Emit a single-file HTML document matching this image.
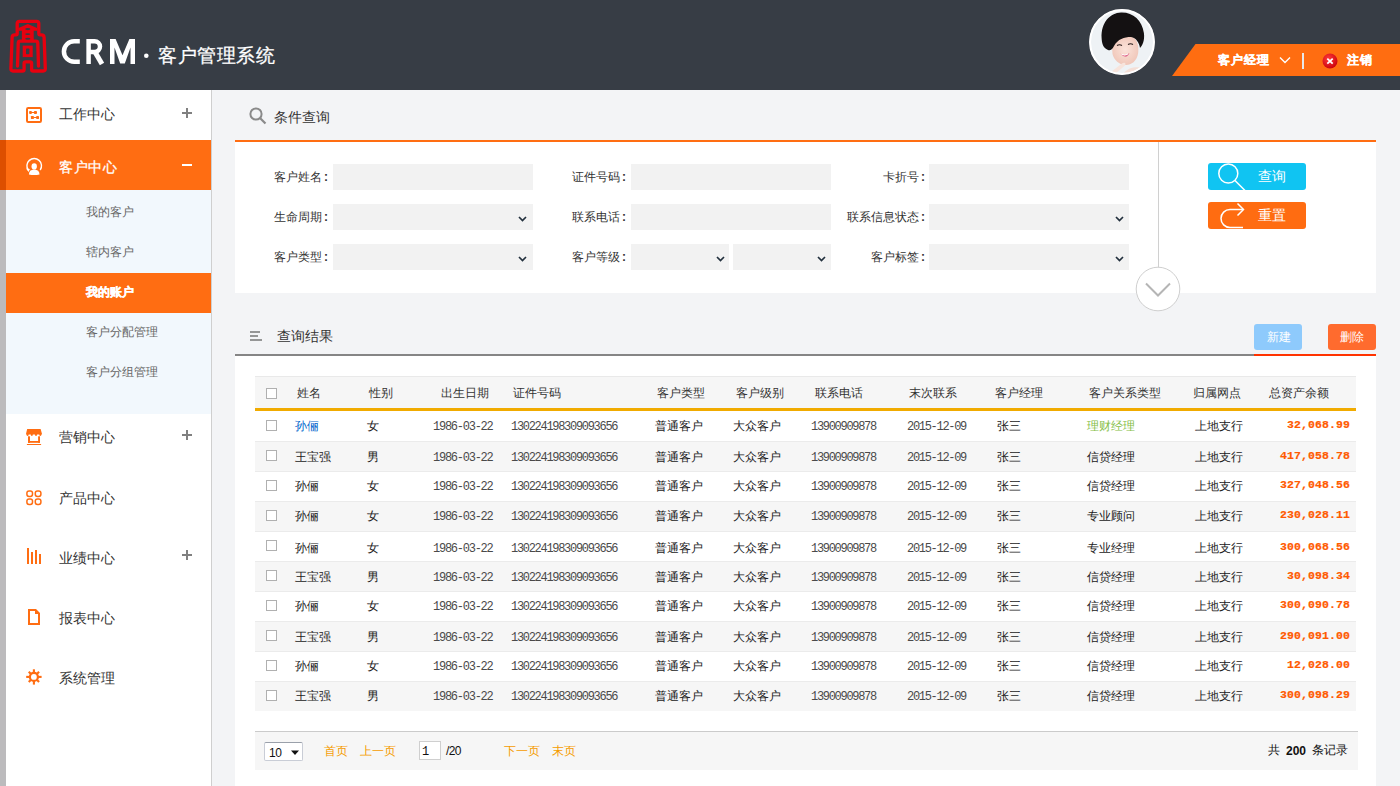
<!DOCTYPE html>
<html><head><meta charset="utf-8">
<style>
*{margin:0;padding:0;box-sizing:border-box}
html,body{width:1400px;height:786px;overflow:hidden;background:#f3f4f6;font-family:"Liberation Sans",sans-serif;color:#333}
.a{position:absolute}
.t{position:absolute;white-space:nowrap;line-height:1}
.mi{font-size:14px;color:#333}
.sub{font-size:12px;color:#666}
.lbl{font-size:12px;color:#333}
.inp{position:absolute;height:26px;background:#f2f2f2}
.th{font-size:12px;color:#333}
.cell{position:absolute;white-space:nowrap;line-height:1;font-size:12px;color:#222}
.num{font-family:"Liberation Mono",monospace;font-size:12px;letter-spacing:-1.2px;color:#4a4a4a}
.amt{font-family:"Liberation Mono",monospace;font-weight:bold;font-size:11.5px;letter-spacing:0.1px;color:#ff5a00;-webkit-text-stroke:0.2px #ff5a00}
.cb{position:absolute;width:11px;height:11px;border:1px solid #b0b0b0;background:#fff}
svg{position:absolute;overflow:visible}
</style></head><body>
<div class="a" style="left:0px;top:0px;width:1400px;height:90px;background:#373d45;"></div>
<svg style="left:0;top:0" width="60" height="90" viewBox="0 0 60 90">
<g fill="none" stroke="#e8000f" stroke-width="3.3" stroke-linejoin="round" stroke-linecap="round">
<path d="M17.20 23.50 Q17.20 21.30 19.40 21.30 L36.60 21.30 Q38.80 21.30 38.80 23.50 L38.80 33.60 Q38.80 34.80 40.00 34.80 L41.40 34.80 Q44.00 34.80 44.10 37.40 L45.31 68.80 Q45.40 71.00 43.20 71.00 L33.20 71.00 Q31.60 71.00 31.60 69.40 L31.60 63.50 Q31.60 61.90 30.00 61.90 L25.70 61.90 Q24.10 61.90 24.10 63.50 L24.10 69.40 Q24.10 71.00 22.50 71.00 L13.00 71.00 Q10.80 71.00 10.89 68.80 L12.10 37.40 Q12.20 34.80 14.70 34.80 L16.00 34.80 Q17.20 34.80 17.20 33.60 Z"/>
<path d="M17.50 66.00 L18.24 42.90 Q18.30 41.10 20.10 41.10 L35.90 41.10 Q37.70 41.10 37.76 42.90 L38.50 66.00 "/>
</g>
<g fill="#e8000f">
<path d="M18.5 27.9 L27.8 24 L37.1 27.9 V30.8 H33.7 V40 H21.9 V30.8 H18.5 Z"/>
<rect x="22.7" y="45.6" width="10" height="11.5"/>
</g>
<g fill="#373d45">
<ellipse cx="27.8" cy="29.1" rx="2.6" ry="1.1"/>
<ellipse cx="27.8" cy="34.1" rx="2.6" ry="0.95"/>
<ellipse cx="27.8" cy="38.8" rx="2.6" ry="0.95"/>
<rect x="26" y="48.5" width="3.4" height="5.8" rx="0.8"/>
</g>
</svg>
<svg style="left:0;top:0" width="150" height="90" viewBox="0 0 150 90">
<g fill="none" stroke="#fff" stroke-width="4.5">
<path d="M79.8 41.2 H74.2 A10.3 10.3 0 0 0 74.2 61.8 H79.8"/>
<path d="M88.6 39 V64"/>
<path d="M88.6 41.2 H94.6 A5.4 5.4 0 0 1 94.6 52 H88.6"/>
<path d="M95.3 52.5 L102 64" stroke-width="5"/>
</g>
<path fill="#fff" d="M110 64 V39 H115.6 L122.5 55.2 L129.4 39 H135 V64 H130.5 V47.5 L124.8 63.5 H120.2 L114.5 47.5 V64 Z"/>
<circle cx="146.3" cy="55.8" r="2.3" fill="#fff"/>
</svg>
<div class="t " style="left:158px;top:46px;font-size:19.3px;color:#fff;-webkit-text-stroke:0.25px #fff;letter-spacing:0.6px">客户管理系统</div>
<svg style="left:1088px;top:8px" width="68" height="68" viewBox="0 0 68 68">
<defs><clipPath id="avc"><circle cx="34" cy="34" r="31"/></clipPath>
<radialGradient id="skin" cx="0.5" cy="0.45" r="0.6"><stop offset="0" stop-color="#fbe3da"/><stop offset="1" stop-color="#efc4b6"/></radialGradient></defs>
<circle cx="34" cy="34" r="32.6" fill="#fff"/>
<g clip-path="url(#avc)">
<rect x="0" y="0" width="68" height="68" fill="#eef2f5"/>
<path d="M34 68 C38 60 46 58 56 60 L60 68 Z" fill="#f4dfd7"/>
<path d="M24 38 C26 31 36 28 44 29 C50 31 51 40 50 46 C48.5 53 43.5 57 38 57 C31 57 26 52 24.5 46 Z" fill="url(#skin)"/>
<path d="M13.6 30 C13 14 22 5 33 4.4 C45 4 54 12 55.9 25 C57 33 54 38 52 40 C51 34 48 30 43 29 C36 29 30 31 26 38 C24 42 22 43 20 42 C15 40 13.8 35 13.6 30 Z" fill="#141112"/>
<path d="M29 37.5 Q31.5 36 34 37.5 M40 36.5 Q42.5 35 45 36.5" stroke="#2a1d1c" stroke-width="1.1" fill="none"/>
<path d="M32 45.5 Q37 49 41.5 45 Q38.5 52 32 45.5 Z" fill="#e06b90"/>
<path d="M33.5 46.3 Q37 48 40 46" stroke="#fff" stroke-width="0.9" fill="none"/>
<path d="M19 67 C24 63 30 58.5 34 55.5 C36 54 38.5 55 37 57.5 C33 61 28 64.5 24 69 Z" fill="#f7e4dc"/>
</g>
<circle cx="34" cy="34" r="32" fill="none" stroke="#fff" stroke-width="1.8"/>
</svg>
<svg style="left:1170px;top:44px" width="230" height="32" viewBox="0 0 230 32"><path d="M25.5 0 H230 V32 H2 Z" fill="#ff6d11"/></svg>
<div class="t " style="left:1218px;top:54px;font-size:12px;color:#fff;font-weight:bold;letter-spacing:0.9px;-webkit-text-stroke:0.35px #fff">客户经理</div>
<svg style="left:1279px;top:56px" width="12" height="8" viewBox="0 0 12 8"><path d="M1 1.5 L6 6.5 L11 1.5" fill="none" stroke="#fff" stroke-width="1.4"/></svg>
<div class="a" style="left:1302px;top:53px;width:1.5px;height:16px;background:#e8e8e8;"></div>
<svg style="left:1320px;top:51px" width="20" height="20" viewBox="0 0 20 20"><defs><radialGradient id="rg" cx="0.4" cy="0.35" r="0.7"><stop offset="0" stop-color="#ff3b3b"/><stop offset="1" stop-color="#c8000c"/></radialGradient></defs><circle cx="10" cy="10" r="7.5" fill="url(#rg)"/><path d="M7.3 7.6 L12.7 12.6 M12.7 7.6 L7.3 12.6" stroke="#fff" stroke-width="1.8"/></svg>
<div class="t " style="left:1347px;top:54px;font-size:12px;color:#fff;font-weight:bold;letter-spacing:0.9px;-webkit-text-stroke:0.35px #fff">注销</div>
<div class="a" style="left:0px;top:90px;width:212px;height:696px;background:#ffffff;border-right:1px solid #cfcfcf"></div>
<div class="a" style="left:0px;top:90px;width:6px;height:696px;background:#bcbbbd;"></div>
<div class="a" style="left:6px;top:140px;width:205px;height:50px;background:#ff6d12;"></div>
<div class="a" style="left:0px;top:140px;width:6px;height:50px;background:#dd4f00;"></div>
<div class="a" style="left:6px;top:190px;width:205px;height:224px;background:#f2f8fd;"></div>
<div class="a" style="left:6px;top:273px;width:205px;height:40px;background:#ff6d12;"></div>
<svg style="left:26px;top:107px" width="16" height="16" viewBox="0 0 16 16">
<rect x="1" y="1" width="14" height="14" rx="1.2" fill="none" stroke="#ff6d12" stroke-width="2"/>
<path d="M5 5.5 H9 M7.5 10.5 H11" stroke="#ff6d12" stroke-width="1"/>
<rect x="3.1" y="4.1" width="2.8" height="2.8" rx="0.9" fill="#ff6d12"/><rect x="7.9" y="4.1" width="3.1" height="2.8" rx="0.9" fill="#ff6d12"/>
<rect x="4.9" y="9" width="3" height="3" rx="0.4" fill="#ff6d12"/><rect x="10.2" y="9" width="2.8" height="3" rx="0.4" fill="#ff6d12"/>
</svg>
<div class="t mi" style="left:59px;top:107px;">工作中心</div>
<svg style="left:182px;top:108px" width="10" height="10" viewBox="0 0 10 10"><path d="M0 5 H10 M5 0 V10" stroke="#808080" stroke-width="2"/></svg>
<svg style="left:25px;top:157px" width="18" height="18" viewBox="0 0 18 18">
<path d="M15.2 13 A7.3 7.3 0 1 0 3.2 13" fill="none" stroke="#fff" stroke-width="1.4"/>
<path d="M1 11.6 L4.9 11.9 L3.6 15 Z" fill="#fff"/>
<ellipse cx="9.2" cy="9.4" rx="2.7" ry="3.1" fill="#fff"/>
<path d="M3.9 17.4 Q3.9 12.6 9.2 12.4 Q14.5 12.6 14.5 17.4 Q9.2 18.4 3.9 17.4 Z" fill="#fff"/>
</svg>
<div class="t mi" style="left:59px;top:160px;color:#fff;-webkit-text-stroke:0.3px #fff;letter-spacing:0.5px">客户中心</div>
<div class="a" style="left:182px;top:164px;width:10px;height:2px;background:#fff;"></div>
<div class="t sub" style="left:86px;top:206px;">我的客户</div>
<div class="t sub" style="left:86px;top:246px;">辖内客户</div>
<div class="t sub" style="left:86px;top:286px;color:#fff;font-weight:bold;-webkit-text-stroke:0.35px #fff">我的账户</div>
<div class="t sub" style="left:86px;top:326px;">客户分配管理</div>
<div class="t sub" style="left:86px;top:366px;">客户分组管理</div>
<svg style="left:26px;top:429px" width="16" height="17" viewBox="0 0 16 17">
<g fill="#ff6d12">
<path d="M1.2 0 H14.6 L15.9 4.6 V5.6 H0.1 V4.6 Z"/>
<circle cx="1.6" cy="5.8" r="1.1"/><circle cx="5.8" cy="5.8" r="1.1"/><circle cx="10" cy="5.8" r="1.1"/><circle cx="14.3" cy="5.8" r="1.1"/>
<rect x="2" y="7.3" width="2" height="6.5"/><rect x="12.1" y="7.3" width="1.9" height="6.5"/><rect x="2" y="12" width="12" height="1.8"/>
<rect x="0.9" y="15" width="14.2" height="1"/>
</g>
</svg>
<div class="t mi" style="left:59px;top:430px;">营销中心</div>
<svg style="left:182px;top:430px" width="10" height="10" viewBox="0 0 10 10"><path d="M0 5 H10 M5 0 V10" stroke="#808080" stroke-width="2"/></svg>
<svg style="left:26px;top:490px" width="16" height="16" viewBox="0 0 16 16">
<g fill="none" stroke="#ff6d12" stroke-width="1.5">
<rect x="0.9" y="0.9" width="5.6" height="5.6" rx="2.2"/><rect x="9.3" y="0.9" width="5.6" height="5.6" rx="2.2"/>
<rect x="0.9" y="8.9" width="5.6" height="5.6" rx="2.2"/><rect x="9.3" y="8.9" width="5.6" height="5.6" rx="2.2"/>
</g></svg>
<div class="t mi" style="left:59px;top:491px;">产品中心</div>
<svg style="left:26px;top:548px" width="16" height="17" viewBox="0 0 16 17">
<g fill="#ff6d12"><rect x="1" y="0" width="2" height="16"/><rect x="5" y="4" width="2" height="12"/><rect x="9" y="2" width="2" height="14"/><rect x="13" y="6" width="2" height="10"/></g>
</svg>
<div class="t mi" style="left:59px;top:551px;">业绩中心</div>
<svg style="left:182px;top:550px" width="10" height="10" viewBox="0 0 10 10"><path d="M0 5 H10 M5 0 V10" stroke="#808080" stroke-width="2"/></svg>
<svg style="left:28px;top:609px" width="13" height="16" viewBox="0 0 13 16">
<path d="M1 1 H7.6 L11 4.4 V15 H1 Z" fill="none" stroke="#ff6d12" stroke-width="2" stroke-linejoin="miter"/>
<path d="M7 0 L12 5 H7 Z" fill="#ff6d12"/>
</svg>
<div class="t mi" style="left:59px;top:611px;">报表中心</div>
<svg style="left:26px;top:669px" width="16" height="16" viewBox="0 0 16 16">
<g fill="#ff6d12">
<circle cx="7.9" cy="7.9" r="5.1"/>
<rect x="6.85" y="0.3" width="2.1" height="15.3"/><rect x="0.2" y="6.85" width="15.4" height="2.1"/>
<rect x="6.85" y="0.6" width="2.1" height="14.6" transform="rotate(45 7.9 7.9)"/><rect x="6.85" y="0.6" width="2.1" height="14.6" transform="rotate(-45 7.9 7.9)"/>
</g><circle cx="7.9" cy="7.9" r="2.9" fill="#fff"/>
</svg>
<div class="t mi" style="left:59px;top:671px;">系统管理</div>
<svg style="left:248px;top:106px" width="20" height="20" viewBox="0 0 20 20"><circle cx="8" cy="8" r="5.6" fill="none" stroke="#8a8a8a" stroke-width="2"/><path d="M12 12 L17.5 17.5" stroke="#8a8a8a" stroke-width="2.2"/></svg>
<div class="t " style="left:274px;top:110px;font-size:14px;color:#333">条件查询</div>
<div class="a" style="left:235px;top:140px;width:1141px;height:2px;background:#ff6d12;"></div>
<div class="a" style="left:235px;top:142px;width:1141px;height:151px;background:#fff;"></div>
<div class="t lbl" style="right:1078px;top:171px;">客户姓名</div>
<div class="t lbl" style="left:324px;top:171px;font-weight:bold;font-size:12px">:</div>
<div class="t lbl" style="right:780px;top:171px;">证件号码</div>
<div class="t lbl" style="left:622px;top:171px;font-weight:bold;font-size:12px">:</div>
<div class="t lbl" style="right:481px;top:171px;">卡折号</div>
<div class="t lbl" style="left:921px;top:171px;font-weight:bold;font-size:12px">:</div>
<div class="t lbl" style="right:1078px;top:211px;">生命周期</div>
<div class="t lbl" style="left:324px;top:211px;font-weight:bold;font-size:12px">:</div>
<div class="t lbl" style="right:780px;top:211px;">联系电话</div>
<div class="t lbl" style="left:622px;top:211px;font-weight:bold;font-size:12px">:</div>
<div class="t lbl" style="right:481px;top:211px;">联系信息状态</div>
<div class="t lbl" style="left:921px;top:211px;font-weight:bold;font-size:12px">:</div>
<div class="t lbl" style="right:1078px;top:251px;">客户类型</div>
<div class="t lbl" style="left:324px;top:251px;font-weight:bold;font-size:12px">:</div>
<div class="t lbl" style="right:780px;top:251px;">客户等级</div>
<div class="t lbl" style="left:622px;top:251px;font-weight:bold;font-size:12px">:</div>
<div class="t lbl" style="right:481px;top:251px;">客户标签</div>
<div class="t lbl" style="left:921px;top:251px;font-weight:bold;font-size:12px">:</div>
<div class="a" style="left:333px;top:164px;width:200px;height:26px;background:#f2f2f2;"></div>
<div class="a" style="left:929px;top:164px;width:200px;height:26px;background:#f2f2f2;"></div>
<div class="a" style="left:333px;top:204px;width:200px;height:26px;background:#f2f2f2;"></div>
<div class="a" style="left:929px;top:204px;width:200px;height:26px;background:#f2f2f2;"></div>
<div class="a" style="left:333px;top:244px;width:200px;height:26px;background:#f2f2f2;"></div>
<div class="a" style="left:929px;top:244px;width:200px;height:26px;background:#f2f2f2;"></div>
<div class="a" style="left:631px;top:164px;width:200px;height:26px;background:#f2f2f2;"></div>
<div class="a" style="left:631px;top:204px;width:200px;height:26px;background:#f2f2f2;"></div>
<div class="a" style="left:631px;top:244px;width:98px;height:26px;background:#f2f2f2;"></div>
<div class="a" style="left:733px;top:244px;width:98px;height:26px;background:#f2f2f2;"></div>
<svg style="left:518px;top:216px" width="9" height="6" viewBox="0 0 9 6"><path d="M1 1 L4.5 4.5 L8 1" fill="none" stroke="#22303d" stroke-width="1.7"/></svg>
<svg style="left:518px;top:256px" width="9" height="6" viewBox="0 0 9 6"><path d="M1 1 L4.5 4.5 L8 1" fill="none" stroke="#22303d" stroke-width="1.7"/></svg>
<svg style="left:1115px;top:216px" width="9" height="6" viewBox="0 0 9 6"><path d="M1 1 L4.5 4.5 L8 1" fill="none" stroke="#22303d" stroke-width="1.7"/></svg>
<svg style="left:1115px;top:256px" width="9" height="6" viewBox="0 0 9 6"><path d="M1 1 L4.5 4.5 L8 1" fill="none" stroke="#22303d" stroke-width="1.7"/></svg>
<svg style="left:716px;top:256px" width="9" height="6" viewBox="0 0 9 6"><path d="M1 1 L4.5 4.5 L8 1" fill="none" stroke="#22303d" stroke-width="1.7"/></svg>
<svg style="left:817px;top:256px" width="9" height="6" viewBox="0 0 9 6"><path d="M1 1 L4.5 4.5 L8 1" fill="none" stroke="#22303d" stroke-width="1.7"/></svg>
<div class="a" style="left:1158px;top:142px;width:1px;height:126px;background:#d0d0d0;"></div>
<svg style="left:1135px;top:266px" width="46" height="46" viewBox="0 0 46 46"><circle cx="23" cy="23" r="21.8" fill="#fff" stroke="#cfcfcf" stroke-width="1"/><path d="M11 17.5 L23 29.5 L35 17.5" fill="none" stroke="#b5b5b5" stroke-width="2"/></svg>
<svg style="left:1208px;top:163px" width="98" height="27" viewBox="0 0 98 27">
<defs><clipPath id="qb"><rect x="0" y="0" width="98" height="27" rx="3"/></clipPath></defs>
<rect x="0" y="0" width="98" height="27" rx="3" fill="#10c4f2"/>
<g clip-path="url(#qb)"><circle cx="20.3" cy="10.5" r="9.5" fill="none" stroke="#fff" stroke-width="1.5"/><path d="M27 17.5 L37 27.5" stroke="#fff" stroke-width="1.5"/></g>
</svg>
<div class="t " style="left:1258px;top:169px;font-size:14px;color:#fff">查询</div>
<svg style="left:1208px;top:202px" width="98" height="27" viewBox="0 0 98 27">
<rect x="0" y="0" width="98" height="27" rx="3" fill="#ff6c11"/>
<path d="M35 25.5 H22 A9 9 0 0 1 22 7.5 H35" fill="none" stroke="#fff" stroke-width="1.5"/>
<path d="M29.5 1.5 L35.5 7.5 L29.5 13.5" fill="none" stroke="#fff" stroke-width="1.5"/>
</svg>
<div class="t " style="left:1258px;top:208px;font-size:14px;color:#fff">重置</div>
<svg style="left:250px;top:331px" width="12" height="10" viewBox="0 0 12 10"><path d="M0 1 H10 M0 5 H8 M0 9 H12" stroke="#777" stroke-width="1.4"/></svg>
<div class="t " style="left:277px;top:329px;font-size:14px;color:#333">查询结果</div>
<div class="a" style="left:1254px;top:324px;width:48px;height:26px;border-radius:3px;background:#8ecafc"></div>
<div class="t " style="left:1267px;top:331px;font-size:12px;color:#fff">新建</div>
<div class="a" style="left:1328px;top:324px;width:48px;height:26px;border-radius:3px;background:#ff6b2e"></div>
<div class="t " style="left:1340px;top:331px;font-size:12px;color:#fff">删除</div>
<div class="a" style="left:235px;top:354px;width:1019px;height:2px;background:#858585;"></div>
<div class="a" style="left:1254px;top:354px;width:122px;height:2px;background:#ff3300;"></div>
<div class="a" style="left:235px;top:356px;width:1141px;height:430px;background:#fff;"></div>
<div class="a" style="left:255px;top:376px;width:1101px;height:1px;background:#e9e9e9;"></div>
<div class="a" style="left:255px;top:377px;width:1101px;height:31px;background:#f6f6f6;"></div>
<div class="a" style="left:255px;top:408px;width:1101px;height:3px;background:#f1ab00;"></div>
<div class="cb" style="left:266px;top:388px"></div>
<div class="t th" style="left:297px;top:387px;">姓名</div>
<div class="t th" style="left:369px;top:387px;">性别</div>
<div class="t th" style="left:441px;top:387px;">出生日期</div>
<div class="t th" style="left:513px;top:387px;">证件号码</div>
<div class="t th" style="left:657px;top:387px;">客户类型</div>
<div class="t th" style="left:736px;top:387px;">客户级别</div>
<div class="t th" style="left:815px;top:387px;">联系电话</div>
<div class="t th" style="left:909px;top:387px;">末次联系</div>
<div class="t th" style="left:995px;top:387px;">客户经理</div>
<div class="t th" style="left:1089px;top:387px;">客户关系类型</div>
<div class="t th" style="left:1193px;top:387px;">归属网点</div>
<div class="t th" style="left:1269px;top:387px;">总资产余额</div>
<div class="cb" style="left:266px;top:420px"></div>
<div class="t cell" style="left:295px;top:420px;color:#0065cc">孙俪</div>
<div class="t cell" style="left:367px;top:420px;">女</div>
<div class="t cell num" style="left:433px;top:421px;letter-spacing:-1.25px">1986-03-22</div>
<div class="t cell num" style="left:511px;top:421px;letter-spacing:-1.3px">130224198309093656</div>
<div class="t cell" style="left:655px;top:420px;">普通客户</div>
<div class="t cell" style="left:733px;top:420px;">大众客户</div>
<div class="t cell num" style="left:811px;top:421px;letter-spacing:-1.3px">13900909878</div>
<div class="t cell num" style="left:907px;top:421px;letter-spacing:-1.3px">2015-12-09</div>
<div class="t cell" style="left:997px;top:420px;">张三</div>
<div class="t cell" style="left:1087px;top:420px;color:#86c049">理财经理</div>
<div class="t cell" style="left:1195px;top:420px;">上地支行</div>
<div class="t cell amt" style="right:50px;top:419px;">32,068.99</div>
<div class="a" style="left:255px;top:441px;width:1101px;height:30px;background:#f6f6f6;"></div>
<div class="a" style="left:255px;top:441px;width:1101px;height:1px;background:#ebebeb;"></div>
<div class="cb" style="left:266px;top:450px"></div>
<div class="t cell" style="left:295px;top:451px;">王宝强</div>
<div class="t cell" style="left:367px;top:451px;">男</div>
<div class="t cell num" style="left:433px;top:452px;letter-spacing:-1.25px">1986-03-22</div>
<div class="t cell num" style="left:511px;top:452px;letter-spacing:-1.3px">130224198309093656</div>
<div class="t cell" style="left:655px;top:451px;">普通客户</div>
<div class="t cell" style="left:733px;top:451px;">大众客户</div>
<div class="t cell num" style="left:811px;top:452px;letter-spacing:-1.3px">13900909878</div>
<div class="t cell num" style="left:907px;top:452px;letter-spacing:-1.3px">2015-12-09</div>
<div class="t cell" style="left:997px;top:451px;">张三</div>
<div class="t cell" style="left:1087px;top:451px;">信贷经理</div>
<div class="t cell" style="left:1195px;top:451px;">上地支行</div>
<div class="t cell amt" style="right:50px;top:450px;">417,058.78</div>
<div class="a" style="left:255px;top:471px;width:1101px;height:1px;background:#ebebeb;"></div>
<div class="cb" style="left:266px;top:480px"></div>
<div class="t cell" style="left:295px;top:480px;">孙俪</div>
<div class="t cell" style="left:367px;top:480px;">女</div>
<div class="t cell num" style="left:433px;top:481px;letter-spacing:-1.25px">1986-03-22</div>
<div class="t cell num" style="left:511px;top:481px;letter-spacing:-1.3px">130224198309093656</div>
<div class="t cell" style="left:655px;top:480px;">普通客户</div>
<div class="t cell" style="left:733px;top:480px;">大众客户</div>
<div class="t cell num" style="left:811px;top:481px;letter-spacing:-1.3px">13900909878</div>
<div class="t cell num" style="left:907px;top:481px;letter-spacing:-1.3px">2015-12-09</div>
<div class="t cell" style="left:997px;top:480px;">张三</div>
<div class="t cell" style="left:1087px;top:480px;">信贷经理</div>
<div class="t cell" style="left:1195px;top:480px;">上地支行</div>
<div class="t cell amt" style="right:50px;top:479px;">327,048.56</div>
<div class="a" style="left:255px;top:501px;width:1101px;height:30px;background:#f6f6f6;"></div>
<div class="a" style="left:255px;top:501px;width:1101px;height:1px;background:#ebebeb;"></div>
<div class="cb" style="left:266px;top:510px"></div>
<div class="t cell" style="left:295px;top:510px;">孙俪</div>
<div class="t cell" style="left:367px;top:510px;">女</div>
<div class="t cell num" style="left:433px;top:511px;letter-spacing:-1.25px">1986-03-22</div>
<div class="t cell num" style="left:511px;top:511px;letter-spacing:-1.3px">130224198309093656</div>
<div class="t cell" style="left:655px;top:510px;">普通客户</div>
<div class="t cell" style="left:733px;top:510px;">大众客户</div>
<div class="t cell num" style="left:811px;top:511px;letter-spacing:-1.3px">13900909878</div>
<div class="t cell num" style="left:907px;top:511px;letter-spacing:-1.3px">2015-12-09</div>
<div class="t cell" style="left:997px;top:510px;">张三</div>
<div class="t cell" style="left:1087px;top:510px;">专业顾问</div>
<div class="t cell" style="left:1195px;top:510px;">上地支行</div>
<div class="t cell amt" style="right:50px;top:509px;">230,028.11</div>
<div class="a" style="left:255px;top:531px;width:1101px;height:1px;background:#ebebeb;"></div>
<div class="cb" style="left:266px;top:540px"></div>
<div class="t cell" style="left:295px;top:542px;">孙俪</div>
<div class="t cell" style="left:367px;top:542px;">女</div>
<div class="t cell num" style="left:433px;top:543px;letter-spacing:-1.25px">1986-03-22</div>
<div class="t cell num" style="left:511px;top:543px;letter-spacing:-1.3px">130224198309093656</div>
<div class="t cell" style="left:655px;top:542px;">普通客户</div>
<div class="t cell" style="left:733px;top:542px;">大众客户</div>
<div class="t cell num" style="left:811px;top:543px;letter-spacing:-1.3px">13900909878</div>
<div class="t cell num" style="left:907px;top:543px;letter-spacing:-1.3px">2015-12-09</div>
<div class="t cell" style="left:997px;top:542px;">张三</div>
<div class="t cell" style="left:1087px;top:542px;">专业经理</div>
<div class="t cell" style="left:1195px;top:542px;">上地支行</div>
<div class="t cell amt" style="right:50px;top:541px;">300,068.56</div>
<div class="a" style="left:255px;top:561px;width:1101px;height:30px;background:#f6f6f6;"></div>
<div class="a" style="left:255px;top:561px;width:1101px;height:1px;background:#ebebeb;"></div>
<div class="cb" style="left:266px;top:570px"></div>
<div class="t cell" style="left:295px;top:571px;">王宝强</div>
<div class="t cell" style="left:367px;top:571px;">男</div>
<div class="t cell num" style="left:433px;top:572px;letter-spacing:-1.25px">1986-03-22</div>
<div class="t cell num" style="left:511px;top:572px;letter-spacing:-1.3px">130224198309093656</div>
<div class="t cell" style="left:655px;top:571px;">普通客户</div>
<div class="t cell" style="left:733px;top:571px;">大众客户</div>
<div class="t cell num" style="left:811px;top:572px;letter-spacing:-1.3px">13900909878</div>
<div class="t cell num" style="left:907px;top:572px;letter-spacing:-1.3px">2015-12-09</div>
<div class="t cell" style="left:997px;top:571px;">张三</div>
<div class="t cell" style="left:1087px;top:571px;">信贷经理</div>
<div class="t cell" style="left:1195px;top:571px;">上地支行</div>
<div class="t cell amt" style="right:50px;top:570px;">30,098.34</div>
<div class="a" style="left:255px;top:591px;width:1101px;height:1px;background:#ebebeb;"></div>
<div class="cb" style="left:266px;top:600px"></div>
<div class="t cell" style="left:295px;top:600px;">孙俪</div>
<div class="t cell" style="left:367px;top:600px;">女</div>
<div class="t cell num" style="left:433px;top:601px;letter-spacing:-1.25px">1986-03-22</div>
<div class="t cell num" style="left:511px;top:601px;letter-spacing:-1.3px">130224198309093656</div>
<div class="t cell" style="left:655px;top:600px;">普通客户</div>
<div class="t cell" style="left:733px;top:600px;">大众客户</div>
<div class="t cell num" style="left:811px;top:601px;letter-spacing:-1.3px">13900909878</div>
<div class="t cell num" style="left:907px;top:601px;letter-spacing:-1.3px">2015-12-09</div>
<div class="t cell" style="left:997px;top:600px;">张三</div>
<div class="t cell" style="left:1087px;top:600px;">信贷经理</div>
<div class="t cell" style="left:1195px;top:600px;">上地支行</div>
<div class="t cell amt" style="right:50px;top:599px;">300,090.78</div>
<div class="a" style="left:255px;top:621px;width:1101px;height:30px;background:#f6f6f6;"></div>
<div class="a" style="left:255px;top:621px;width:1101px;height:1px;background:#ebebeb;"></div>
<div class="cb" style="left:266px;top:630px"></div>
<div class="t cell" style="left:295px;top:631px;">王宝强</div>
<div class="t cell" style="left:367px;top:631px;">男</div>
<div class="t cell num" style="left:433px;top:632px;letter-spacing:-1.25px">1986-03-22</div>
<div class="t cell num" style="left:511px;top:632px;letter-spacing:-1.3px">130224198309093656</div>
<div class="t cell" style="left:655px;top:631px;">普通客户</div>
<div class="t cell" style="left:733px;top:631px;">大众客户</div>
<div class="t cell num" style="left:811px;top:632px;letter-spacing:-1.3px">13900909878</div>
<div class="t cell num" style="left:907px;top:632px;letter-spacing:-1.3px">2015-12-09</div>
<div class="t cell" style="left:997px;top:631px;">张三</div>
<div class="t cell" style="left:1087px;top:631px;">信贷经理</div>
<div class="t cell" style="left:1195px;top:631px;">上地支行</div>
<div class="t cell amt" style="right:50px;top:630px;">290,091.00</div>
<div class="a" style="left:255px;top:651px;width:1101px;height:1px;background:#ebebeb;"></div>
<div class="cb" style="left:266px;top:660px"></div>
<div class="t cell" style="left:295px;top:660px;">孙俪</div>
<div class="t cell" style="left:367px;top:660px;">女</div>
<div class="t cell num" style="left:433px;top:661px;letter-spacing:-1.25px">1986-03-22</div>
<div class="t cell num" style="left:511px;top:661px;letter-spacing:-1.3px">130224198309093656</div>
<div class="t cell" style="left:655px;top:660px;">普通客户</div>
<div class="t cell" style="left:733px;top:660px;">大众客户</div>
<div class="t cell num" style="left:811px;top:661px;letter-spacing:-1.3px">13900909878</div>
<div class="t cell num" style="left:907px;top:661px;letter-spacing:-1.3px">2015-12-09</div>
<div class="t cell" style="left:997px;top:660px;">张三</div>
<div class="t cell" style="left:1087px;top:660px;">信贷经理</div>
<div class="t cell" style="left:1195px;top:660px;">上地支行</div>
<div class="t cell amt" style="right:50px;top:659px;">12,028.00</div>
<div class="a" style="left:255px;top:681px;width:1101px;height:30px;background:#f6f6f6;"></div>
<div class="a" style="left:255px;top:681px;width:1101px;height:1px;background:#ebebeb;"></div>
<div class="cb" style="left:266px;top:690px"></div>
<div class="t cell" style="left:295px;top:690px;">王宝强</div>
<div class="t cell" style="left:367px;top:690px;">男</div>
<div class="t cell num" style="left:433px;top:691px;letter-spacing:-1.25px">1986-03-22</div>
<div class="t cell num" style="left:511px;top:691px;letter-spacing:-1.3px">130224198309093656</div>
<div class="t cell" style="left:655px;top:690px;">普通客户</div>
<div class="t cell" style="left:733px;top:690px;">大众客户</div>
<div class="t cell num" style="left:811px;top:691px;letter-spacing:-1.3px">13900909878</div>
<div class="t cell num" style="left:907px;top:691px;letter-spacing:-1.3px">2015-12-09</div>
<div class="t cell" style="left:997px;top:690px;">张三</div>
<div class="t cell" style="left:1087px;top:690px;">信贷经理</div>
<div class="t cell" style="left:1195px;top:690px;">上地支行</div>
<div class="t cell amt" style="right:50px;top:689px;">300,098.29</div>
<div class="a" style="left:255px;top:731px;width:1103px;height:1px;background:#cbcbcb;"></div>
<div class="a" style="left:255px;top:732px;width:1103px;height:38px;background:#f6f6f6;"></div>
<div class="a" style="left:264px;top:742px;width:39px;height:19px;background:#fff;border:1px solid #c9cdd6;border-top-color:#9aa0aa;border-radius:2px"></div>
<div class="t cell" style="left:269px;top:747px;font-size:12px;color:#111;letter-spacing:-0.5px">10</div>
<svg style="left:290px;top:750px" width="10" height="6" viewBox="0 0 10 6"><path d="M1 0.5 H9 L5 5 Z" fill="#111"/></svg>
<div class="t cell" style="left:324px;top:745px;color:#f59c00">首页</div>
<div class="t cell" style="left:360px;top:745px;color:#f59c00">上一页</div>
<div class="a" style="left:419px;top:741px;width:22px;height:19px;background:#fff;border:1px solid #cfcfcf"></div>
<div class="t cell num" style="left:422px;top:746px;color:#111">1</div>
<div class="t cell" style="left:446px;top:745px;color:#111;font-size:12px;letter-spacing:-0.6px">/20</div>
<div class="t cell" style="left:504px;top:745px;color:#f59c00">下一页</div>
<div class="t cell" style="left:552px;top:745px;color:#f59c00">末页</div>
<div class="t cell" style="left:1268px;top:744px;color:#111">共</div>
<div class="t cell" style="left:1286px;top:745px;color:#111;font-weight:bold;font-family:Liberation Sans">200</div>
<div class="t cell" style="left:1312px;top:744px;color:#111">条记录</div>
</body></html>
